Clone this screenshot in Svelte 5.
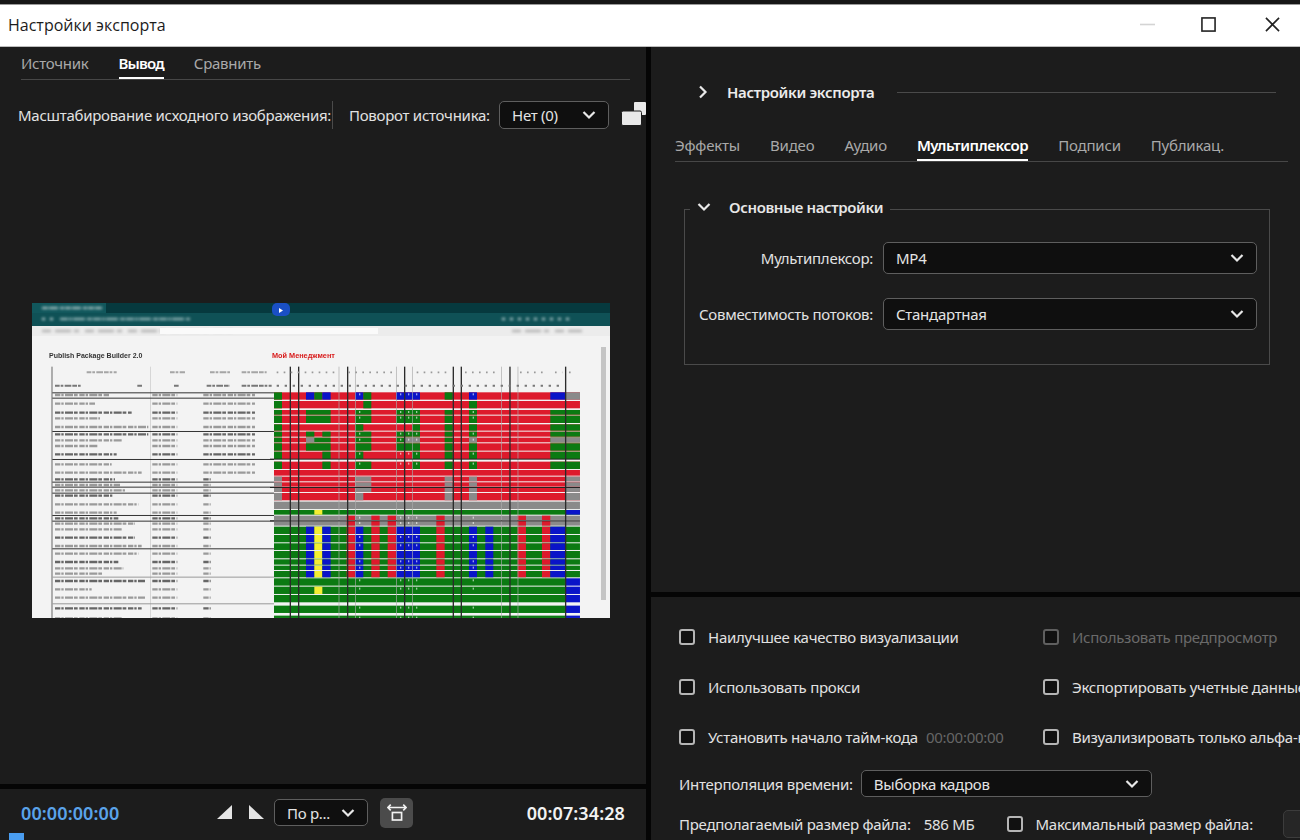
<script>
  const R = "#dd1a2c", G = "#0b7a12", B = "#0a14c8", Y = "#f4ee33", A = "#8a8a8a";

  const rowTops = [292, 318, 345, 362, 388, 410, 428, 445, 470, 500, 525, 545, 562, 578, 594, 620, 645, 662, 678, 695, 720, 745, 768, 793, 812, 828, 850, 875, 900, 932, 962];

  const greenBlocks = [[12, 36, G], [108, 182, G], [255, 304, G], [378, 450, G], [524, 548, G], [597, 621, G], [841, 930, G]];
  const grayBlocks = [[12, 36, A], [255, 304, A], [524, 548, A], [597, 621, A], [885, 930, A]];
  const redStripes = [[230, 255, R], [304, 329, R], [353, 378, R], [499, 524, R], [743, 768, R], [816, 841, R]];
  const blueRow = [[108, 133, B], [133, 157, Y], [157, 182, B], ...redStripes, [255, 280, B], [378, 450, B], [597, 621, B], [646, 670, B], [841, 885, B]];
  const endBlue = [[885, 930, B]];

  const rows = [
    [R, [[12, 36, G], [108, 133, B], [133, 157, G], [157, 182, B], [255, 280, B], [280, 304, G], [378, 450, B], [524, 548, G], [597, 621, B], [841, 885, B], [885, 930, A]]],
    [R, [[12, 36, G], [280, 304, G], [597, 621, G]]],
    [R, greenBlocks],
    [R, greenBlocks],
    [R, [[12, 36, G], [255, 280, G], [426, 450, G], [524, 548, G], [597, 621, G], [841, 930, G]]],
    [R, [[12, 36, G], [108, 133, G], [157, 182, G], [255, 304, G], [378, 450, G], [524, 548, G], [597, 621, G], [841, 930, G]]],
    [R, [...greenBlocks, [108, 133, A], [402, 450, A], [597, 621, A], [841, 930, A]]],
    [R, greenBlocks],
    [R, [[12, 36, G], [157, 182, G], [255, 280, G], [426, 450, G], [524, 548, G], [597, 621, G], [841, 930, G]]],
    [R, [[12, 36, G], [157, 182, G], [255, 304, G], [426, 450, G], [524, 548, G], [597, 621, G], [841, 930, G]]],
    [R, []],
    [R, grayBlocks],
    [R, grayBlocks],
    [R, grayBlocks],
    [R, [[12, 36, A], [255, 280, A], [524, 548, A], [597, 621, A], [885, 930, A]]],
    [A, []],
    [G, [[133, 157, Y], [885, 930, B]]],
    [A, redStripes],
    [A, redStripes],
    [G, blueRow],
    [G, blueRow],
    [G, blueRow],
    [G, blueRow],
    [G, blueRow],
    [G, blueRow],
    [G, blueRow],
    [G, endBlue],
    [G, [[133, 157, Y], ...endBlue]],
    [G, endBlue],
    [G, endBlue],
    [G, endBlue]
  ];

  // row bars nearly touch their neighbours, so take the height from the next top
  const barHeight = (i) => Math.min((rowTops[i + 1] ?? 972) - rowTops[i] - 3, 22);

  const darkLines = [59, 84, 231, 402, 548, 572, 718, 885];
  const lightLines = [206, 255, 378, 426, 694, 743];
  const ticks = [267, 390, 414, 438, 608];
  const tableRules = [292, 308, 408, 492, 560, 575, 593, 660, 677, 760];
  const smudgeWidths = [165, 120, 230, 135, 280, 280, 200, 130, 185, 170, 260, 180, 195, 210, 175, 250, 185, 190, 240, 200, 240, 260, 250, 190, 205, 145, 270, 110, 270, 260, 200];
</script>

{#snippet chevron()}
  <svg class="chev" viewBox="0 0 14 10"><path d="M1.5 2l5.5 5.5L12.500 2" /></svg>
{/snippet}

<div class="page">
  <div class="strip"></div>
  <header class="titlebar">
    <span>Настройки экспорта</span>
    <div class="winbtns">
      <svg viewBox="0 0 16 16" class="min"><path d="M0 8h16" /></svg>
      <svg viewBox="0 0 16 16"><rect x="1" y="1" width="14" height="14" /></svg>
      <svg viewBox="0 0 16 16" class="close"><path d="M1 1l14 14M15 1L1 15" /></svg>
    </div>
  </header>

  <main class="main">
    <section class="left">
      <div class="source">
        <nav class="tabs lefttabs">
          <span>Источник</span>
          <span class="active">Вывод</span>
          <span>Сравнить</span>
        </nav>
        <div class="scaling">
          <span class="scale-label">Масштабирование исходного изображения:</span>
          <span class="rot-label">Поворот источника:</span>
          <div class="select rot"><span>Нет (0)</span>{@render chevron()}</div>
          <svg class="crop" viewBox="0 0 25 24">
            <rect x="13" y="0" width="12" height="13" rx="1" />
            <rect x="0.500" y="9" width="20" height="14.500" rx="1.500" class="front" />
          </svg>
        </div>
        <div class="viewer">
          <svg class="shot" viewBox="0 0 578 315" width="578" height="315">
            <rect width="578" height="315" fill="#f3f3f3" />
            <rect width="578" height="10" fill="#06393e" />
            <rect y="10" width="578" height="13" fill="#0f5156" />
            <rect width="74" height="10" fill="#11575c" />
            <rect y="23" width="578" height="10" fill="#ececec" />
            <rect x="240" width="18" height="13" rx="5" fill="#1a4fc4" />
            <path d="M247 5l4 2.500-4 2.500z" fill="#fff" />
            <g class="smudge">
              <path d="M10 5h60" stroke="#b9cdce" stroke-width="2" stroke-dasharray="6 1 9 2 4 1" />
              <path d="M28 16h130" stroke="#a8c4c6" stroke-width="2" stroke-dasharray="8 1 3 1 12 2 5 1" />
              <path d="M10 16h12M470 16h70" stroke="#d5e3e3" stroke-width="2" stroke-dasharray="3 5" />
              <path d="M10 28h190M480 28h70" stroke="#a8a8a8" stroke-width="2" stroke-dasharray="9 4 16 3 5 6" />
            </g>
            <rect x="128" y="25" width="218" height="6" fill="#fafafa" />
            <text x="17" y="55" class="shot-title">Publish Package Builder 2.0</text>
            <text x="240" y="55" class="shot-red">Мой Менеджмент</text>
            <rect x="569" y="44" width="5" height="253" fill="#c4c4c4" />

            <g transform="translate(-12 -8) scale(0.3333)">
              <rect x="94" y="215" width="4" height="755" fill="#8a8a8a" />
              <rect x="391" y="215" width="2" height="755" fill="#c8c8c8" />
              <g class="smudge">
                <path d="M200 232h90M450 232h45M570 232h60M665 232h75" stroke="#a5a5a5" stroke-width="6" stroke-dasharray="14 3 8 4 20 3" />
                <path d="M105 272h80M352 272h16M462 272h16M560 272h70M665 272h90" stroke="#777" stroke-width="6" stroke-dasharray="14 3 8 4 20 3" />
                {#each rowTops as top, i}
                  <path
                    d="M105 {top + 8}h{smudgeWidths[i]}M397 {top + 8}h75M550 {top + 8}h{i < 11 ? 155 : 22}"
                    stroke={i % 3 === 2 ? "#666" : "#9a9a9a"}
                    stroke-width="7"
                    stroke-dasharray="16 3 7 4 24 3 11 5"
                  />
                {/each}
              </g>
              {#each tableRules as y}
                <rect x="97" {y} width="665" height="3" fill="#333" />
              {/each}
              <rect x="97" y="845" width="665" height="3" fill="#999" />
              <rect x="97" y="925" width="665" height="3" fill="#999" />
            </g>

            <g transform="translate(238 -8) scale(0.3333)">
              {#each rows as row, i}
                <rect x="12" y={rowTops[i]} width={row[0] === G && i > 25 ? 873 : 918} height={barHeight(i)} fill={row[0]} />
                {#each row[1] as seg}
                  <rect x={seg[0]} y={rowTops[i]} width={seg[1] - seg[0]} height={barHeight(i)} fill={seg[2]} />
                {/each}
                {#if i < 10 || i > 15}
                  {#each ticks as t}
                    <rect x={t} y={rowTops[i] + 3} width="4" height="6" fill="#ffffff" opacity={i % 3 === 1 ? 0 : 0.6} />
                  {/each}
                {/if}
              {/each}
              {#each lightLines as x}
                <rect {x} y="215" width="2" height="755" fill="#aaa" />
              {/each}
              {#each darkLines as x}
                <rect {x} y="215" width="4" height="755" fill="#2b2b2b" />
              {/each}
              <rect x="0" y="491" width="930" height="3" fill="#222" />
              <rect x="0" y="576" width="930" height="3" fill="#222" />
              <rect x="0" y="676" width="930" height="3" fill="#222" />
              <g class="smudge">
                <path d="M20 232h180M235 232h140M440 232h105M585 232h100M750 232h80M855 232h22M897 232h20" stroke="#999" stroke-width="5" stroke-dasharray="5 16" />
                <path d="M20 272h850" stroke="#777" stroke-width="6" stroke-dasharray="7 17" />
              </g>
            </g>
          </svg>
        </div>
      </div>

      <footer class="transport">
        <span class="time-in">00:00:00:00</span>
        <div class="marks">
          <svg viewBox="0 0 15 15"><path d="M15 0v14H0z" /></svg>
          <svg viewBox="0 0 15 15"><path d="M0 0v14h15z" /></svg>
        </div>
        <div class="select fit"><span>По р...</span>{@render chevron()}</div>
        <div class="fitbtn">
          <svg viewBox="0 0 24 22"><path d="M1 5h22M4.500 1.500L1 5l3.500 3.500M19.500 1.500L23 5l-3.500 3.500" /><rect x="6.500" y="11" width="11" height="9" /></svg>
        </div>
        <span class="time-out">00:07:34:28</span>
        <span class="playhead"></span>
      </footer>
    </section>

    <section class="right">
      <div class="settings">
        <div class="section-head">
          <svg class="chev side" viewBox="0 0 10 14"><path d="M2 1.500L7.500 7 2 12.500" /></svg>
          <strong>Настройки экспорта</strong>
          <span class="rule"></span>
        </div>
        <nav class="tabs righttabs">
          <span>Эффекты</span>
          <span>Видео</span>
          <span>Аудио</span>
          <span class="active">Мультиплексор</span>
          <span>Подписи</span>
          <span>Публикац.</span>
        </nav>
        <div class="group">
          <div class="legend">{@render chevron()}<strong>Основные настройки</strong></div>
          <div class="field">
            <span>Мультиплексор:</span>
            <div class="select"><span>MP4</span>{@render chevron()}</div>
          </div>
          <div class="field">
            <span>Совместимость потоков:</span>
            <div class="select"><span>Стандартная</span>{@render chevron()}</div>
          </div>
        </div>
      </div>

      <div class="options">
        <div class="checks">
          <label><i></i>Наилучшее качество визуализации</label>
          <label class="disabled"><i></i>Использовать предпросмотр</label>
          <label><i></i>Использовать прокси</label>
          <label><i></i>Экспортировать учетные данные</label>
          <label><i></i>Установить начало тайм-кода <em>00:00:00:00</em></label>
          <label><i></i>Визуализировать только альфа-канал</label>
        </div>
        <div class="interp">
          <span>Интерполяция времени:</span>
          <div class="select"><span>Выборка кадров</span>{@render chevron()}</div>
        </div>
        <div class="filesize">
          <span>Предполагаемый размер файла:</span>
          <span class="size">586 МБ</span>
          <label><i></i>Максимальный размер файла:</label>
          <span class="maxinput"></span>
        </div>
      </div>
    </section>
  </main>
</div>

<style>
  :global(body) {
    margin: 0;
    background: #000;
  }

  .page {
    width: 1300px;
    height: 840px;
    display: flex;
    flex-direction: column;
    overflow: hidden;
    background: #050505;
    color: #e2e2e2;
    font-family: "Noto Sans", "Open Sans", sans-serif;
    font-size: 15px;
    letter-spacing: -0.27px;
  }

  .strip {
    height: 4px;
    background: #161616;
    border-bottom: 1px solid #9a9a9a;
    flex: none;
  }

  .titlebar {
    height: 42px;
    flex: none;
    background: #fff;
    color: #1c1c1c;
    display: flex;
    align-items: center;
    justify-content: space-between;
    padding: 0 0 2px 8px;
    font-family: "Open Sans", sans-serif;
    font-size: 16px;
    letter-spacing: 0;
    border-bottom: 1px solid #bdbdbd;
    box-sizing: border-box;
  }

  .winbtns {
    display: flex;
    gap: 46px;
    padding-right: 20px;
  }

  .winbtns svg {
    width: 15px;
    height: 15px;
    fill: none;
    stroke: #222;
    stroke-width: 1.7;
  }

  .winbtns .min {
    stroke: #d4d4d4;
  }

  .winbtns .close {
    margin-left: 3px;
  }

  .main {
    flex: 1;
    min-height: 0;
    display: grid;
    grid-template-columns: 646px 1fr;
    grid-template-rows: minmax(0, 1fr);
    column-gap: 5px;
  }

  .left,
  .right {
    display: flex;
    flex-direction: column;
    min-width: 0;
    min-height: 0;
    gap: 5px;
  }

  .source,
  .settings,
  .options,
  .transport {
    background: #1c1c1c;
  }

  .source {
    height: 737px;
    overflow: hidden;
    flex: none;
  }

  .tabs {
    display: flex;
    gap: 30px;
    border-bottom: 1px solid #474747;
    box-sizing: border-box;
    color: #a9a9a9;
  }

  .tabs span {
    height: 100%;
    display: flex;
    align-items: center;
    box-sizing: border-box;
    padding-top: 2px;
    border-bottom: 2px solid transparent;
    margin-bottom: -1px;
  }

  .tabs .active {
    color: #fff;
    font-weight: 600;
    letter-spacing: -0.45px;
    border-bottom-color: #fff;
  }

  .lefttabs {
    height: 33px;
    margin: 0 16px 0 21px;
  }

  .lefttabs .active {
    letter-spacing: -0.8px;
  }

  .righttabs {
    letter-spacing: -0.2px;
  }

  .scaling {
    display: flex;
    align-items: center;
    height: 28px;
    margin-top: 21px;
    padding-left: 18px;
  }

  .scale-label {
    border-right: 1px solid #4a4a4a;
    width: 314px;
    flex: none;
    white-space: nowrap;
    height: 28px;
    line-height: 28px;
  }

  .rot-label {
    margin-left: 16px;
    margin-right: 8px;
    width: 142px;
    flex: none;
    white-space: nowrap;
  }

  .select {
    display: flex;
    align-items: center;
    justify-content: space-between;
    box-sizing: border-box;
    background: #0f0f0f;
    border: 1.5px solid #5e5e5e;
    border-radius: 5px;
    padding: 0 12px;
    color: #e4e4e4;
    white-space: nowrap;
  }

  .chev {
    width: 14px;
    height: 10px;
    fill: none;
    stroke: #e8e8e8;
    stroke-width: 2.200;
    flex: none;
  }

  .rot {
    width: 110px;
    height: 28px;
    flex: none;
  }

  .crop {
    width: 25px;
    height: 24px;
    margin-left: 12px;
    margin-top: -3px;
    flex: none;
    fill: #e9e9e9;
  }

  .crop .front {
    stroke: #1c1c1c;
    stroke-width: 1;
  }

  .viewer {
    padding: 174px 0 0 32px;
  }

  .shot {
    display: block;
    filter: blur(0.6px);
  }

  .smudge {
    filter: blur(1.5px);
  }

  .shot-title {
    font: 700 7px "Liberation Sans", sans-serif;
    letter-spacing: 0;
    fill: #333;
  }

  .shot-red {
    font: 700 7.300px "Liberation Sans", sans-serif;
    letter-spacing: 0;
    fill: #d81b1b;
  }

  .transport {
    flex: 1;
    min-height: 0;
    position: relative;
    display: flex;
    align-items: center;
    padding: 0 21px 4px;
  }

  .time-in {
    color: #5aa3ea;
    font-weight: 600;
    font-size: 18px;
    letter-spacing: 0.1px;
    width: 196px;
    flex: none;
  }

  .marks {
    display: flex;
    gap: 17px;
    width: 57px;
    flex: none;
  }

  .marks svg {
    width: 15px;
    height: 15px;
    flex: none;
    fill: #e4e4e4;
  }

  .fit {
    width: 94px;
    height: 27px;
    flex: none;
    padding: 0 12px;
  }

  .fitbtn {
    width: 33px;
    height: 30px;
    flex: none;
    margin-left: 12px;
    border-radius: 5px;
    background: #4b4b4b;
    display: flex;
    align-items: center;
    justify-content: center;
  }

  .fitbtn svg {
    width: 20px;
    height: 19px;
    fill: none;
    stroke: #f2f2f2;
    stroke-width: 2;
  }

  .time-out {
    margin-left: auto;
    color: #f2f2f2;
    font-weight: 600;
    font-size: 18px;
    letter-spacing: 0.1px;
  }

  .playhead {
    position: absolute;
    left: 9px;
    bottom: 0;
    width: 15px;
    height: 7px;
    background: #4a9df0;
  }

  .settings {
    height: 545px;
    flex: none;
    padding-top: 34px;
    box-sizing: border-box;
  }

  .section-head {
    display: flex;
    align-items: center;
    height: 22px;
    padding-left: 47px;
    margin-right: 24px;
  }

  .section-head strong {
    color: #ececec;
    font-weight: 600;
    letter-spacing: -0.35px;
    margin-left: 19px;
    white-space: nowrap;
  }

  .chev.side {
    width: 10px;
    height: 14px;
  }

  .rule {
    flex: 1;
    height: 1px;
    margin-left: 23px;
    background: #4a4a4a;
  }

  .righttabs {
    height: 33px;
    margin: 26px 12px 0 24px;
  }

  .group {
    position: relative;
    margin: 47px 30px 0 33px;
    height: 156px;
    box-sizing: border-box;
    border: 1px solid #4a4a4a;
    padding-top: 32px;
  }

  .legend {
    position: absolute;
    top: -13px;
    left: 5px;
    height: 20px;
    display: flex;
    align-items: center;
    gap: 18px;
    padding: 0 7px;
    background: #1c1c1c;
  }

  .legend strong {
    color: #e6e6e6;
    font-weight: 600;
    letter-spacing: -0.4px;
    white-space: nowrap;
  }

  .field {
    display: grid;
    grid-template-columns: 188px 374px;
    column-gap: 10px;
    align-items: center;
    margin-bottom: 24px;
  }

  .field > span {
    text-align: right;
    white-space: nowrap;
  }

  .field .select {
    height: 32px;
  }

  .options {
    flex: 1;
    padding: 32px 0 0 28px;
    min-width: 0;
    min-height: 0;
    overflow: hidden;
  }

  .checks {
    display: grid;
    grid-template-columns: 364px 400px;
    grid-auto-rows: 50px;
    white-space: nowrap;
  }

  label {
    display: flex;
    align-items: center;
    height: 16px;
    gap: 13px;
    white-space: nowrap;
  }

  label i {
    width: 12px;
    height: 12px;
    flex: none;
    background: #111;
    border: 2px solid #b5b5b5;
    border-radius: 3px;
  }

  label em {
    font-style: normal;
    color: #666;
    margin-left: -5px;
  }

  .disabled {
    color: #6a6a6a;
  }

  .disabled i {
    border-color: #5f5f5f;
  }

  .interp {
    display: flex;
    align-items: center;
    gap: 8px;
    margin-top: -9px;
  }

  .interp span {
    white-space: nowrap;
  }

  .interp .select {
    width: 291px;
    height: 27px;
    flex: none;
  }

  .filesize {
    display: flex;
    align-items: center;
    height: 26px;
    margin-top: 14px;
    white-space: nowrap;
  }

  .size {
    margin-left: 13px;
    margin-right: 32px;
  }

  .maxinput {
    width: 40px;
    height: 26px;
    margin-left: 30px;
    flex: none;
    background: #262626;
    border: 1px solid #3c3c3c;
    border-radius: 5px;
  }
</style>
